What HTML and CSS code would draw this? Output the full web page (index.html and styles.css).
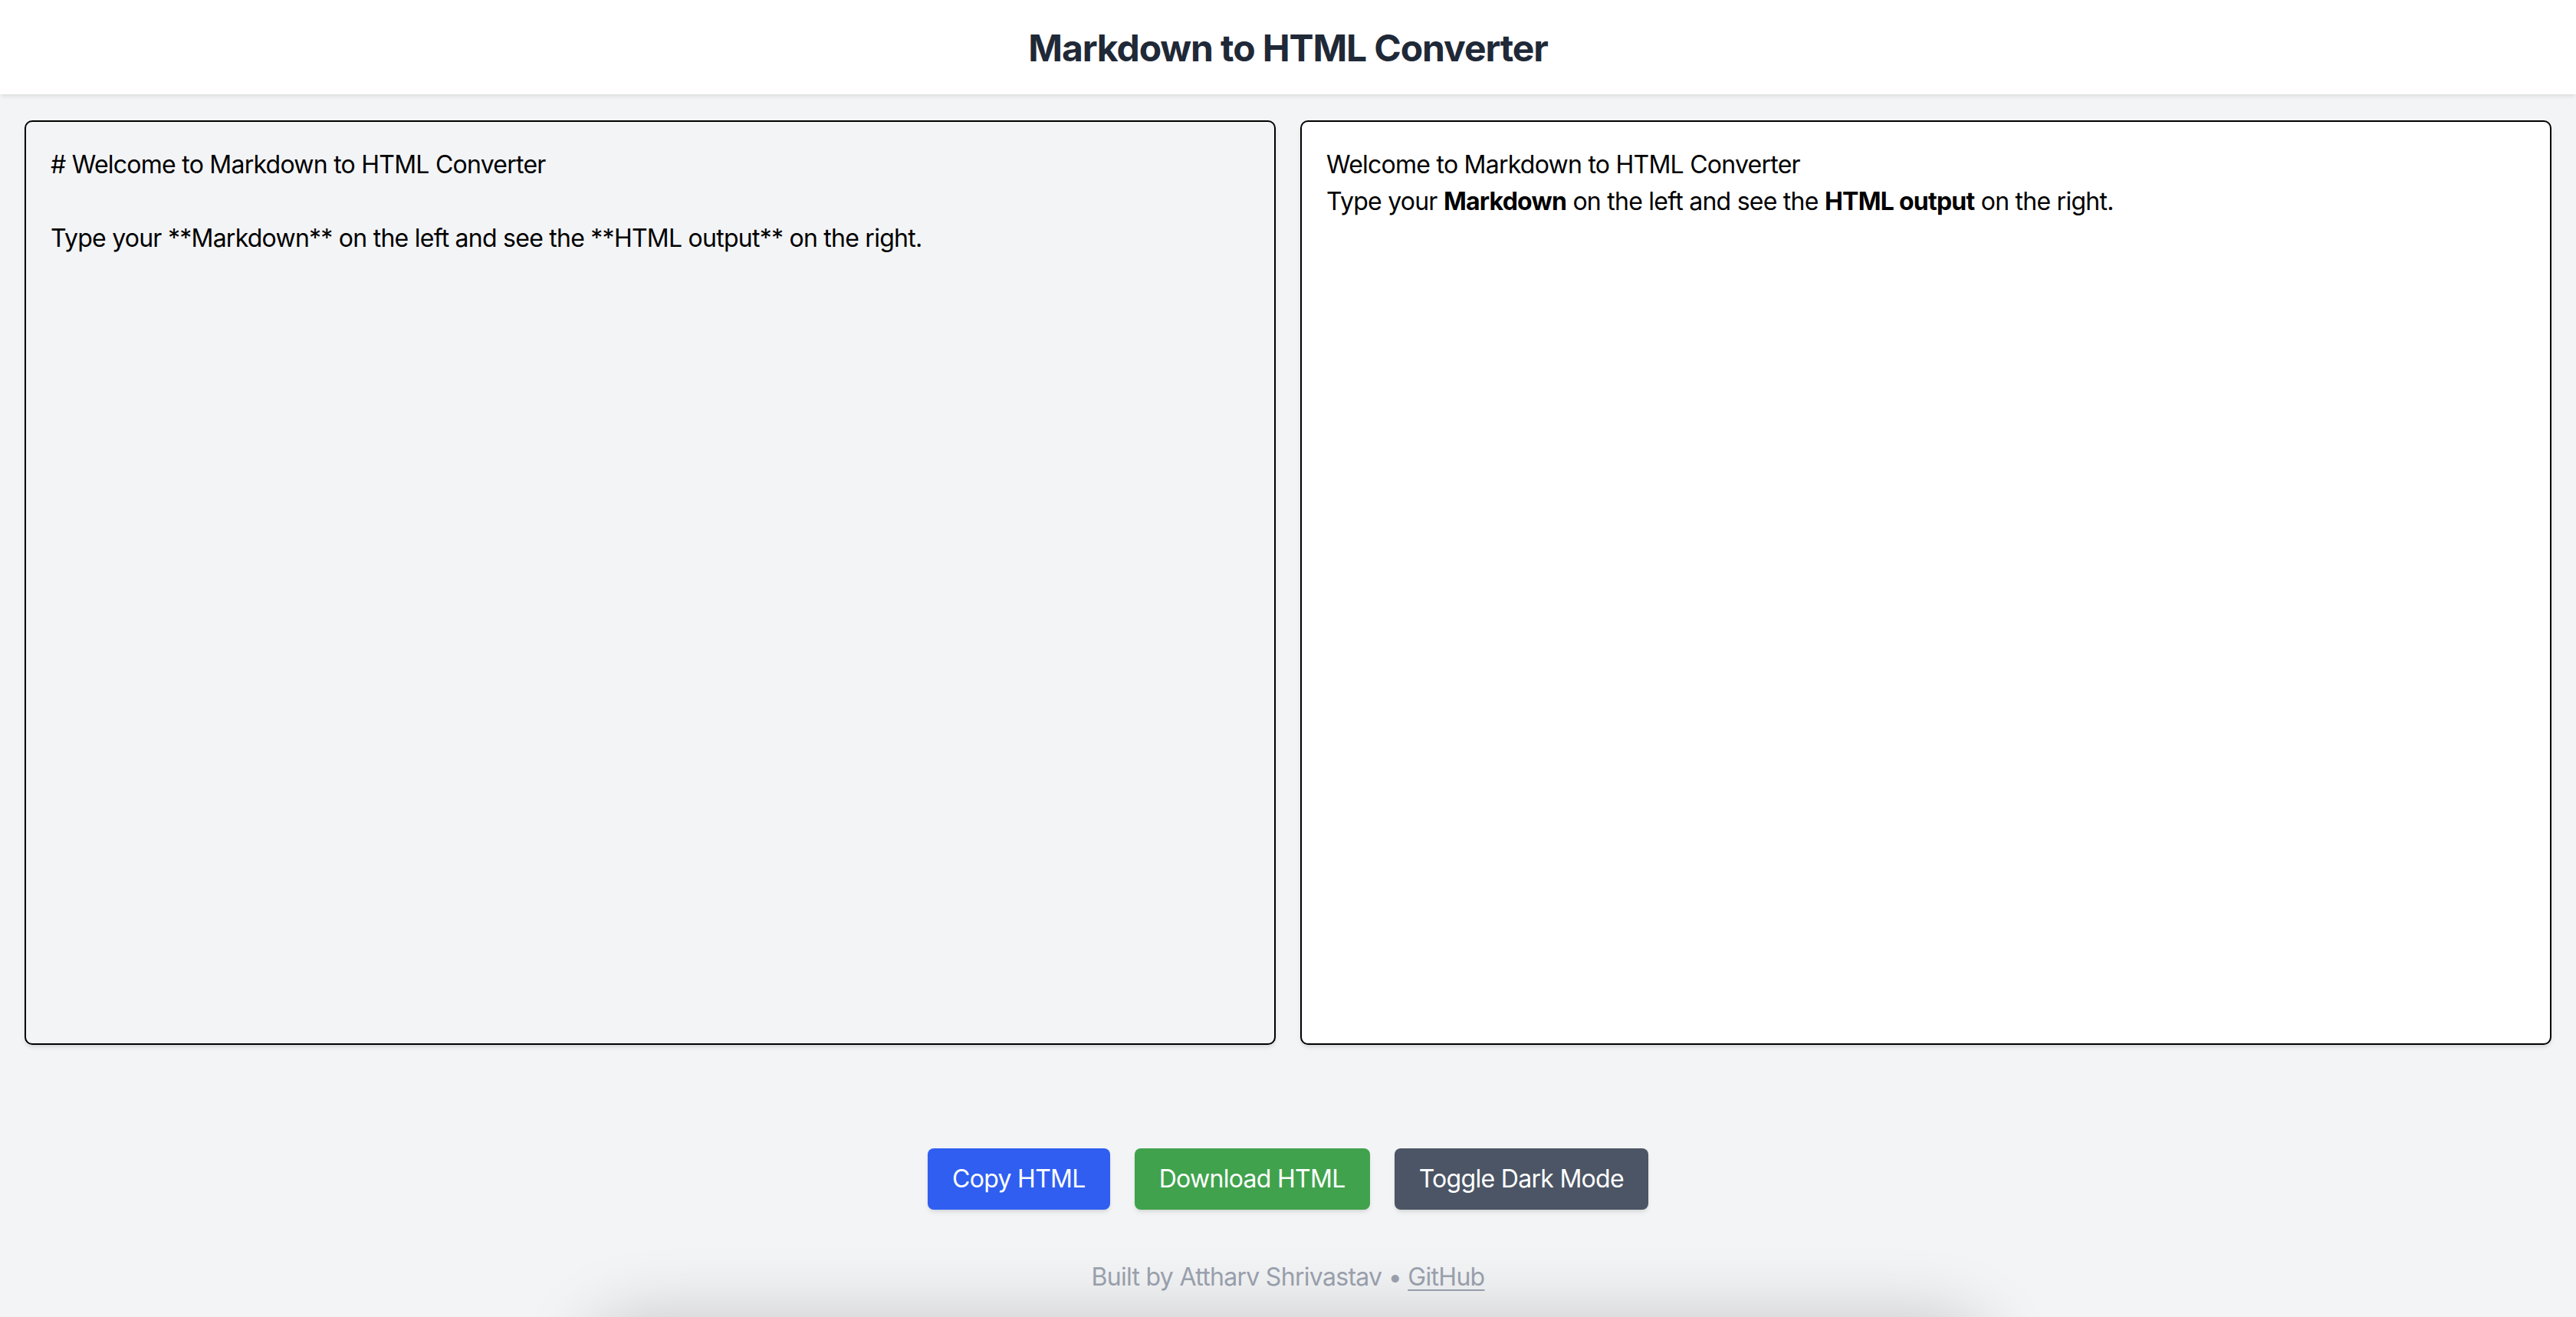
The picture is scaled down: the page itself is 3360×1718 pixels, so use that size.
FILE: index.html
```html
<!DOCTYPE html>
<html lang="en">
<head>
<meta charset="utf-8">
<title>Markdown to HTML Converter</title>
<link rel="stylesheet" href="styles.css">
</head>
<body>
<div class="app">
  <header class="topbar">
    <h1 class="title">Markdown to HTML Converter</h1>
  </header>
  <main class="editor">
    <textarea class="pane pane-input" spellcheck="false"># Welcome to Markdown to HTML Converter

Type your **Markdown** on the left and see the **HTML output** on the right.</textarea>
    <div class="pane pane-output">
      <h1 class="out-h1">Welcome to Markdown to HTML Converter</h1>
      <p class="out-p">Type your <strong>Markdown</strong> on the left and see the <strong>HTML output</strong> on the right.</p>
    </div>
  </main>
  <div class="actions">
    <button class="btn btn-blue">Copy HTML</button>
    <button class="btn btn-green">Download HTML</button>
    <button class="btn btn-gray">Toggle Dark Mode</button>
  </div>
  <footer class="footer">Built by Attharv Shrivastav &bull; <a class="footer-link" href="#">GitHub</a></footer>
  <div class="bottom-shadow"></div>
</div>
</body>
</html>
```
FILE: styles.css
```css
* { box-sizing: border-box; }
html, body {
  margin: 0;
  padding: 0;
  height: 1718px;
  overflow: hidden;
}
body {
  background: #f3f4f6;
  font-family: "Inter", "Liberation Sans", sans-serif;
  color: #000;
}
.app {
  position: relative;
  height: 1718px;
  overflow: hidden;
  display: flex;
  flex-direction: column;
}
.topbar {
  background: #ffffff;
  height: 123px;
  display: flex;
  align-items: center;
  justify-content: center;
  box-shadow: 0 4px 6px -1px rgba(0,0,0,0.08), 0 2px 4px -2px rgba(0,0,0,0.06);
  position: relative;
  z-index: 1;
}
.title {
  margin: 0;
  font-size: 48px;
  line-height: 64px;
  font-weight: 700;
  color: #1f2937;
  letter-spacing: -1.1px;
  padding-top: 2px;
}
.editor {
  display: grid;
  grid-template-columns: 1fr 1fr;
  gap: 32px;
  padding: 34px 32px 0 32px;
}
.pane {
  height: 1206px;
  border: 2px solid #000;
  border-radius: 10px;
  padding: 32px;
  font-family: "Inter", "Liberation Sans", sans-serif;
  font-size: 32px;
  line-height: 48px;
  letter-spacing: -0.75px;
  color: #000;
  box-shadow: 0 4px 6px -1px rgba(0,0,0,0.1), 0 2px 4px -2px rgba(0,0,0,0.08);
}
.pane-input {
  background: #f3f4f6;
  resize: none;
  outline: none;
  overflow: hidden;
  width: 100%;
  display: block;
  margin: 0;
}
.pane-output {
  background: #ffffff;
}
.out-h1, .out-p {
  margin: 0;
  font-size: 32px;
  line-height: 48px;
  font-weight: 400;
}
.out-p strong { font-weight: 700; }
.actions {
  display: flex;
  justify-content: center;
  gap: 32px;
  margin-top: 135px;
}
.btn {
  border: 0;
  border-radius: 8px;
  padding: 16px 32px;
  height: 80px;
  font-family: "Inter", "Liberation Sans", sans-serif;
  font-size: 32px;
  line-height: 48px;
  letter-spacing: -0.7px;
  color: #ffffff;
  box-shadow: 0 4px 6px -1px rgba(0,0,0,0.1), 0 2px 4px -2px rgba(0,0,0,0.08);
}
.btn-blue { background: #2f5ef1; }
.btn-green { background: #40a24c; }
.btn-gray { background: #4b5565; }
.footer {
  margin-top: 64px;
  text-align: center;
  font-size: 32px;
  line-height: 48px;
  letter-spacing: -0.7px;
  color: #9ca3af;
}
.footer-link {
  color: #9ca3af;
  text-decoration: underline;
  text-underline-offset: 5px;
  text-decoration-thickness: 2px;
}
.bottom-shadow {
  position: absolute;
  left: 780px;
  width: 1800px;
  top: 1740px;
  height: 200px;
  border-radius: 60px;
  background: #d0d1d4;
  box-shadow: 0 0 90px 24px rgba(0,0,0,0.18);
}
```
